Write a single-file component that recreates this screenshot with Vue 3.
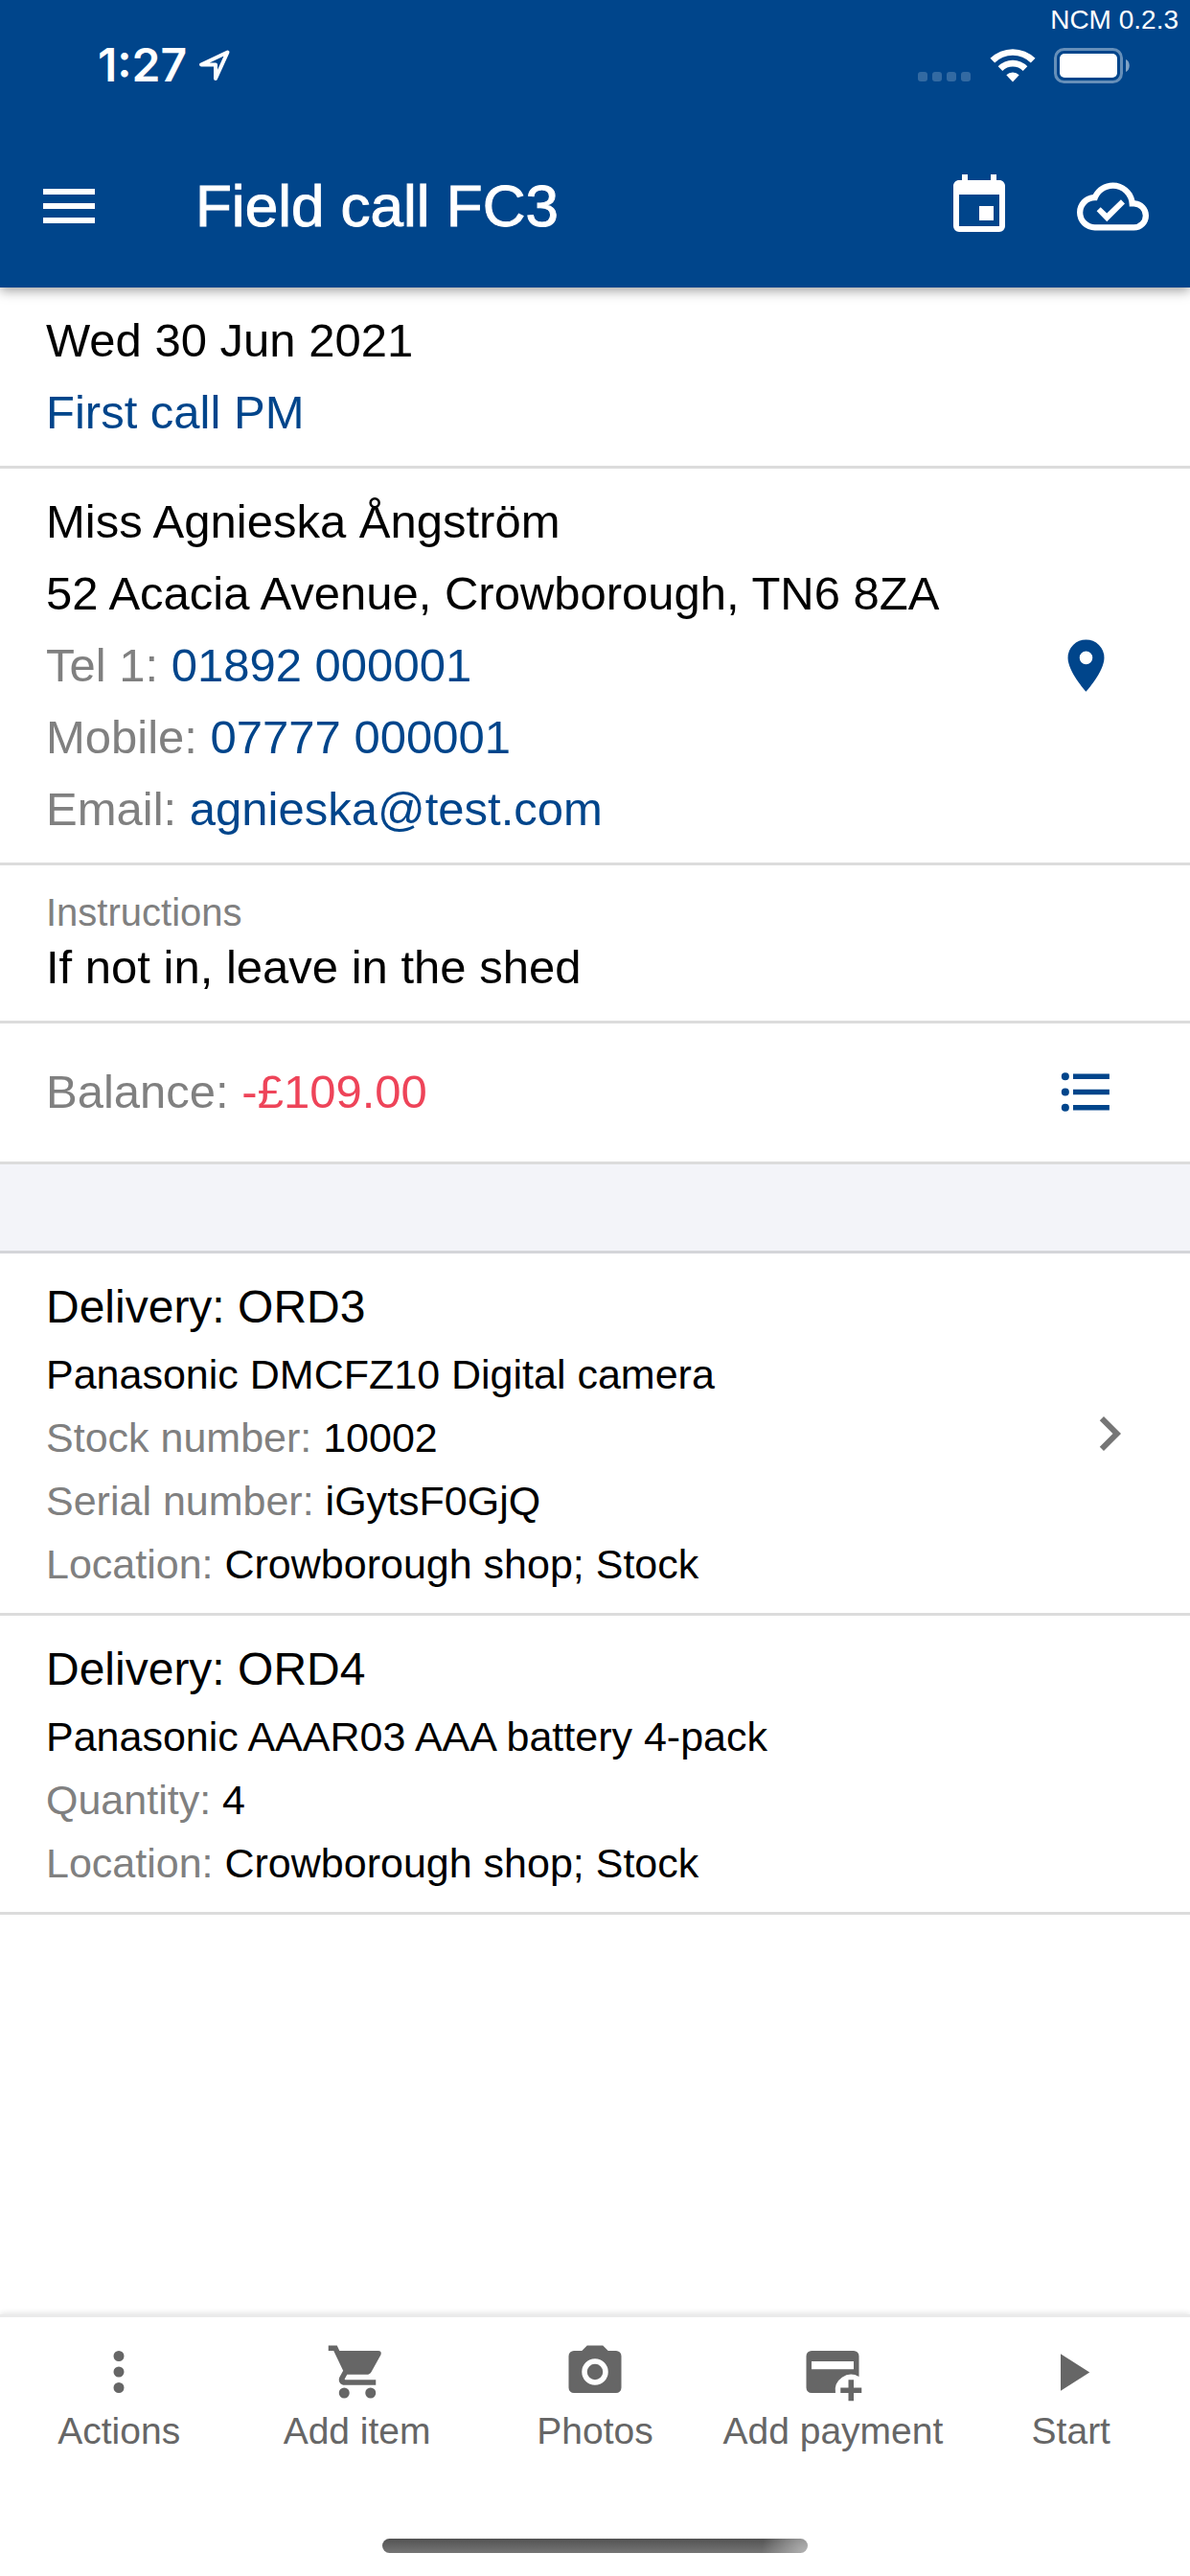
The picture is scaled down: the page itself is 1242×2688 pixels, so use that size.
<script setup>
const contacts = [
  { label: 'Tel 1:', value: '01892 000001', href: 'tel:01892000001' },
  { label: 'Mobile:', value: '07777 000001', href: 'tel:07777000001' },
  { label: 'Email:', value: 'agnieska@test.com', href: 'mailto:agnieska@test.com' },
]

const deliveries = [
  {
    title: 'Delivery: ORD3',
    product: 'Panasonic DMCFZ10 Digital camera',
    details: [
      { label: 'Stock number:', value: '10002' },
      { label: 'Serial number:', value: 'iGytsF0GjQ' },
      { label: 'Location:', value: 'Crowborough shop; Stock' },
    ],
    opens: true,
  },
  {
    title: 'Delivery: ORD4',
    product: 'Panasonic AAAR03 AAA battery 4-pack',
    details: [
      { label: 'Quantity:', value: '4' },
      { label: 'Location:', value: 'Crowborough shop; Stock' },
    ],
    opens: false,
  },
]

const actions = [
  {
    label: 'Actions',
    icon: 'M12 16a2 2 0 1 1 0 4a2 2 0 0 1 0-4M12 10a2 2 0 1 1 0 4a2 2 0 0 1 0-4M12 4a2 2 0 1 1 0 4a2 2 0 0 1 0-4Z',
  },
  {
    label: 'Add item',
    icon: 'M17 18a2 2 0 1 1 0 4a2 2 0 0 1 0-4M1 2H4.27L5.21 4H20A1 1 0 0 1 21 5C21 5.17 20.95 5.34 20.88 5.5L17.3 11.97C16.96 12.58 16.3 13 15.55 13H8.1L7.2 14.63L7.17 14.75A.25 .25 0 0 0 7.42 15H19V17H7C5.89 17 5 16.1 5 15C5 14.65 5.09 14.32 5.24 14.04L6.6 11.59L3 4H1V2M7 18a2 2 0 1 1 0 4a2 2 0 0 1 0-4Z',
  },
  {
    label: 'Photos',
    icon: 'M4 4H7L9 2H15L17 4H20A2 2 0 0 1 22 6V18A2 2 0 0 1 20 20H4A2 2 0 0 1 2 18V6A2 2 0 0 1 4 4M12 7a5 5 0 1 0 0 10a5 5 0 0 0 0-10M12 9a3 3 0 1 1 0 6a3 3 0 0 1 0-6Z',
  },
  {
    label: 'Add payment',
    icon: 'M4 4H20A2 2 0 0 1 22 6V13.8A6 6 0 0 0 13.08 20H4A2 2 0 0 1 2 18V6A2 2 0 0 1 4 4ZM4 8V11H20V8ZM18 15h2v3h3v2h-3v3h-2v-3h-3v-2h3Z',
  },
  { label: 'Start', icon: 'M8 5.14V19.14L19 12.14Z' },
]
</script>

<template>
  <div class="app">
    <header class="header">
      <span class="version">NCM 0.2.3</span>
      <div class="status">
        <span class="time">1:27</span>
        <svg class="arrow" viewBox="0 0 34 34" aria-hidden="true">
          <path d="M30.500 3.500L3 16.500H18V31Z" />
        </svg>
        <span class="signal"><i v-for="n in 4" :key="n"></i></span>
        <svg class="wifi" viewBox="0 0 48 36" aria-hidden="true">
          <path d="M0.500 10.800A33.500 33.500 0 0 1 47.500 10.800L42.800 15.500A26.500 26.500 0 0 0 5.200 15.500Z" />
          <path d="M8.700 19.200A21.500 21.500 0 0 1 39.300 19.200L34.700 24A15 15 0 0 0 13.300 24Z" />
          <path d="M17.300 28.200A9.700 9.700 0 0 1 30.700 28.200L24 35.500Z" />
        </svg>
        <svg class="battery" viewBox="0 0 80 37" aria-hidden="true">
          <rect x="1.500" y="1.500" width="69" height="34" rx="9" fill="none" stroke="#fff" stroke-opacity=".4" stroke-width="3" />
          <rect x="6" y="6" width="60" height="25" rx="5" fill="#fff" />
          <path d="M75 12C80 14 80 23 75 25Z" fill="#fff" fill-opacity=".5" />
        </svg>
      </div>
      <div class="bar">
        <button class="icon-button" type="button" aria-label="Menu">
          <svg class="icon" viewBox="0 0 24 24"><path d="M3 6H21V8H3V6M3 11H21V13H3V11M3 16H21V18H3V16Z" /></svg>
        </button>
        <h1 class="title">Field call FC3</h1>
        <button class="icon-button" type="button" aria-label="Calendar">
          <svg class="icon" viewBox="0 0 24 24">
            <path d="M19 19H5V8H19M16 1V3H8V1H6V3H5C3.890 3 3 3.890 3 5V19A2 2 0 0 0 5 21H19A2 2 0 0 0 21 19V5C21 3.890 20.100 3 19 3H18V1M17 12H12V17H17V12Z" />
          </svg>
        </button>
        <button class="icon-button" type="button" aria-label="Synced">
          <svg class="icon cloud" viewBox="0 0 24 24">
            <path d="M19 18H6A4 4 0 0 1 6 10H6.710C7.370 7.690 9.500 6 12 6A5.500 5.500 0 0 1 17.500 11.500V12H19A3 3 0 0 1 19 18M19.350 10.030C18.670 6.590 15.640 4 12 4C9.110 4 6.600 5.640 5.350 8.030C2.340 8.360 0 10.900 0 14A6 6 0 0 0 6 20H19A5 5 0 0 0 24 15C24 12.360 21.950 10.220 19.350 10.030Z" />
            <path d="M10 17L6.600 13.500L7.900 12.200L10 14.200L14.700 9.700L16 11Z" />
          </svg>
        </button>
      </div>
    </header>

    <main class="content">
      <section class="block">
        <p class="line">Wed 30 Jun 2021</p>
        <p class="line accent">First call PM</p>
      </section>

      <section class="block row">
        <div>
          <p class="line">Miss Agnieska Ångström</p>
          <p class="line">52 Acacia Avenue, Crowborough, TN6 8ZA</p>
          <p v-for="c in contacts" :key="c.label" class="line">
            <span class="muted">{{ c.label }}</span> <a class="accent" :href="c.href">{{ c.value }}</a>
          </p>
        </div>
        <button class="icon-button accent" type="button" aria-label="Show on map">
          <svg class="icon side" viewBox="0 0 24 24">
            <path d="M12 11.500A2.500 2.500 0 0 1 12 6.500A2.500 2.500 0 0 1 12 11.500M12 2A7 7 0 0 0 5 9C5 14.250 12 22 12 22C12 22 19 14.250 19 9A7 7 0 0 0 12 2Z" />
          </svg>
        </button>
      </section>

      <section class="block note">
        <h2 class="note-label muted">Instructions</h2>
        <p class="note-text">If not in, leave in the shed</p>
      </section>

      <section class="block row balance">
        <p class="line"><span class="muted">Balance:</span> <span class="negative">-£109.00</span></p>
        <button class="icon-button accent" type="button" aria-label="Transactions">
          <svg class="icon side" viewBox="0 0 24 24">
            <path d="M7 5H21V7H7V5M7 13V11H21V13H7M4 4.500a1.500 1.500 0 1 1 0 3a1.500 1.500 0 0 1 0-3M4 10.500a1.500 1.500 0 1 1 0 3a1.500 1.500 0 0 1 0-3M7 19V17H21V19H7M4 16.500a1.500 1.500 0 1 1 0 3a1.500 1.500 0 0 1 0-3Z" />
          </svg>
        </button>
      </section>

      <div class="band"></div>

      <section v-for="d in deliveries" :key="d.title" class="block row">
        <div>
          <h2 class="order">{{ d.title }}</h2>
          <p class="detail">{{ d.product }}</p>
          <p v-for="item in d.details" :key="item.label" class="detail">
            <span class="muted">{{ item.label }}</span> {{ item.value }}
          </p>
        </div>
        <button v-if="d.opens" class="icon-button chevron" type="button" aria-label="Open delivery">
          <svg class="icon" viewBox="0 0 24 24"><path d="M8.590 16.590L13.170 12L8.590 7.410L10 6L16 12L10 18Z" /></svg>
        </button>
      </section>
    </main>

    <footer class="footer">
      <nav class="tabs">
        <button v-for="a in actions" :key="a.label" class="tab" type="button">
          <svg class="tab-icon" viewBox="0 0 24 24" aria-hidden="true"><path fill-rule="evenodd" :d="a.icon" /></svg>
          <span>{{ a.label }}</span>
        </button>
      </nav>
      <div class="home"></div>
    </footer>
  </div>
</template>

<style>
body {
  margin: 0;
  background: #fff;
}
</style>

<style scoped>
.app {
  display: flex;
  flex-direction: column;
  min-height: 100vh;
  background: #fff;
  color: #000;
  font-family: "Liberation Sans", Arial, sans-serif;
  font-size: 49px;
}

h1,
h2,
p {
  margin: 0;
  font-weight: 400;
}

a {
  text-decoration: none;
}

.header {
  position: relative;
  display: flex;
  flex-direction: column;
  gap: 83px;
  padding: 40px 0 49px;
  background: #00458b;
  color: #fff;
  box-shadow: 0 3px 12px rgba(0, 0, 0, 0.4);
}

.version {
  position: absolute;
  top: 5px;
  right: 12px;
  font-size: 28px;
  line-height: 32px;
}

.status {
  display: flex;
  align-items: center;
  height: 56px;
  padding: 0 62px 0 102px;
}

.time {
  font-family: Inter, sans-serif;
  font-size: 48px;
  font-weight: 600;
  line-height: 56px;
}

.arrow {
  width: 34px;
  height: 34px;
  margin-left: 12px;
  fill: none;
  stroke: #fff;
  stroke-width: 4;
  stroke-linejoin: round;
}

.signal {
  display: flex;
  gap: 5px;
  align-self: flex-end;
  margin: 0 20px 11px auto;
}

.signal i {
  width: 10px;
  height: 10px;
  border-radius: 3px;
  background: rgba(255, 255, 255, 0.2);
}

.wifi {
  width: 48px;
  height: 36px;
  margin-right: 19px;
  fill: #fff;
}

.battery {
  width: 80px;
  height: 37px;
}

.bar {
  display: flex;
  align-items: center;
  height: 72px;
  padding: 0 43px 0 36px;
}

.title {
  flex: 1;
  margin-left: 96px;
  font-size: 62px;
  line-height: 72px;
  -webkit-text-stroke: 1px currentColor;
}

.icon-button {
  display: flex;
  flex: none;
  padding: 0;
  border: 0;
  background: none;
  color: inherit;
}

.icon {
  width: 72px;
  height: 72px;
  fill: currentColor;
}

.icon.cloud {
  width: 75px;
  height: 75px;
  margin-left: 66px;
}

.icon.side {
  width: 65px;
  height: 65px;
  margin-right: 28px;
}

.content {
  flex: 1;
}

.block {
  padding: 18px 48px;
  border-bottom: 3px solid #dcdcdc;
}

.row {
  display: flex;
  align-items: center;
  justify-content: space-between;
}

.line {
  line-height: 75px;
}

.order {
  font-size: 48px;
  line-height: 75px;
}

.detail {
  font-size: 43px;
  line-height: 66px;
}

.muted {
  color: #808080;
}

.icon-button.accent,
.accent {
  color: #00458b;
}

.negative {
  color: #ee4459;
}

.note {
  padding: 24px 48px;
}

.note-label {
  font-size: 40px;
  line-height: 51px;
}

.note-text {
  line-height: 63px;
}

.balance {
  padding: 34px 48px 35px;
}

.band {
  height: 90px;
  border-bottom: 3px solid #d4d5d9;
  background: #f3f4f9;
}

.chevron {
  color: #757575;
}

.footer {
  border-top: 3px solid #ebebeb;
  background: #fff;
  box-shadow: 0 -1px 6px rgba(0, 0, 0, 0.12);
}

.tabs {
  display: grid;
  grid-template-columns: repeat(5, 1fr);
  padding: 24px 0 88px;
}

.tab {
  display: flex;
  flex-direction: column;
  align-items: center;
  gap: 5px;
  padding: 0;
  border: 0;
  background: none;
  color: #666;
  font-family: inherit;
  font-size: 39px;
  line-height: 48px;
  white-space: nowrap;
}

.tab-icon {
  width: 66px;
  height: 66px;
  fill: currentColor;
}

.home {
  width: 444px;
  height: 15px;
  margin: 0 auto 24px;
  border-radius: 8px;
  background:
    radial-gradient(circle at 100% 100%, #b4b4b4, transparent 48px),
    linear-gradient(#525252, #757575);
}
</style>
